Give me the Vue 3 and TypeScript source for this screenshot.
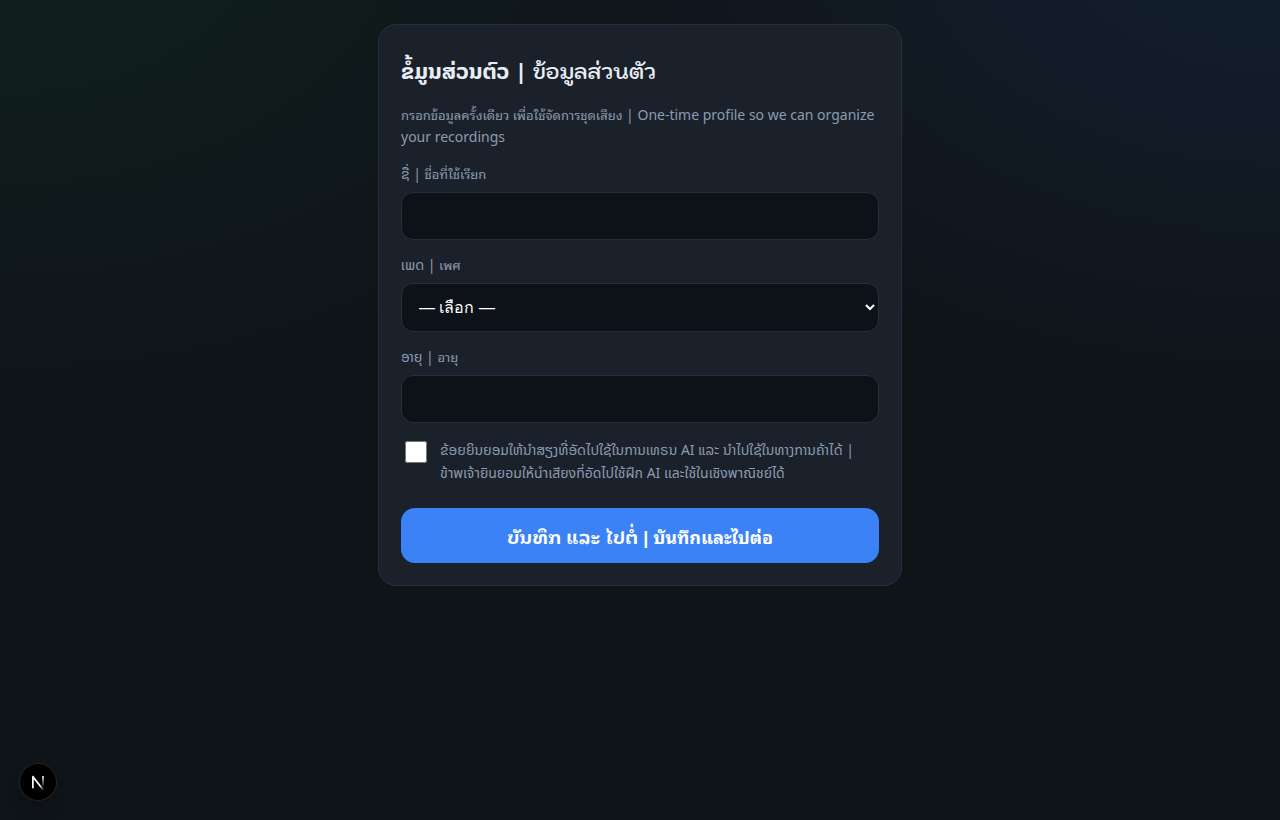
<script setup lang="ts">
import { ref } from 'vue'

const name = ref('')
const gender = ref('')
const age = ref('')
const consent = ref(false)
</script>

<template>
  <main class="page">
    <form class="card" @submit.prevent>
      <h1>ຂໍ້ມູນສ່ວນຕົວ | <span lang="th">ข้อมูลส่วนตัว</span></h1>
      <p class="intro"><span lang="th">กรอกข้อมูลครั้งเดียว เพื่อใช้จัดการชุดเสียง</span> | One-time profile so we can organize your recordings</p>

      <label class="caption" for="name">ຊື່ | <span lang="th">ชื่อที่ใช้เรียก</span></label>
      <input id="name" v-model="name" class="field" type="text" />

      <label class="caption" for="gender">ເພດ | <span lang="th">เพศ</span></label>
      <select id="gender" v-model="gender" class="field">
        <option value="">— เลือก —</option>
        <option value="male">ชาย</option>
        <option value="female">หญิง</option>
      </select>

      <label class="caption" for="age">ອາຍຸ | <span lang="th">อายุ</span></label>
      <input id="age" v-model="age" class="field" type="text" inputmode="numeric" />

      <div class="consent">
        <input id="consent" v-model="consent" type="checkbox" />
        <label for="consent">ຂ້ອຍຍິນຍອມໃຫ້ນຳສຽງທີ່ອັດໄປໃຊ້ໃນການເທຣນ AI ແລະ ນຳໄປໃຊ້ໃນທາງການຄ້າໄດ້ | <span lang="th">ข้าพเจ้ายินยอมให้นำเสียงที่อัดไปใช้ฝึก AI และใช้ในเชิงพาณิชย์ได้</span></label>
      </div>

      <button class="submit" type="submit">ບັນທຶກ ແລະ ໄປຕໍ່ | บันทึกและไปต่อ</button>
    </form>

    <button class="badge" type="button" aria-label="Next.js">
      <svg viewBox="0 0 40 40" width="36" height="36" fill="none" aria-hidden="true">
        <defs>
          <linearGradient id="stem" x1="0" y1="13" x2="0" y2="26" gradientUnits="userSpaceOnUse">
            <stop stop-color="#fff" />
            <stop offset="1" stop-color="#fff" stop-opacity="0" />
          </linearGradient>
          <linearGradient id="slash" x1="20" y1="20" x2="27" y2="29" gradientUnits="userSpaceOnUse">
            <stop stop-color="#fff" />
            <stop offset="0.4" stop-color="#fff" />
            <stop offset="1" stop-color="#fff" stop-opacity="0" />
          </linearGradient>
        </defs>
        <path d="M14.3 27V14.5" stroke="#fff" stroke-width="1.9" />
        <path d="M13.8 13.5L26 28.8" stroke="url(#slash)" stroke-width="1.9" />
        <path d="M24.6 13.2h1.9v12.5h-1.9z" fill="url(#stem)" />
      </svg>
    </button>
  </main>
</template>

<style>
body {
  margin: 0;
  background: #0f1419;
}
</style>

<style scoped>
* {
  box-sizing: border-box;
}

.page {
  min-height: 100vh;
  padding: 24px 18px;
  background:
    radial-gradient(1200px 800px at 0% -10%, rgba(34, 197, 94, 0.08), transparent 60%),
    radial-gradient(1200px 800px at 100% -10%, rgba(59, 130, 246, 0.11), transparent 60%),
    #0f1419;
  color: #e8eef5;
  font-family: "Noto Sans Lao", "Noto Sans", sans-serif;
  font-size: 16px;
  line-height: 24px;
}

.card {
  display: flex;
  flex-direction: column;
  width: 100%;
  max-width: 524px;
  margin: 0 auto;
  padding: 22px;
  border: 1px solid #262e39;
  border-radius: 18px;
  background: #1b212b;
}

span[lang="th"] {
  line-height: 1;
}

h1 {
  margin: 8px 0 16px;
  font-size: 22px;
  font-weight: 700;
  line-height: 33px;
}

h1 span {
  font-family: Kodchasan, "Noto Sans Thai Looped", sans-serif;
  font-size: 21px;
  font-weight: 600;
}

.intro {
  margin: 0 0 15px;
  color: #8b9cb0;
  font-size: 14px;
  line-height: 22px;
}

.intro span,
.caption span {
  font-family: "Noto Sans Thai Looped", sans-serif;
  font-size: 13px;
}

.caption {
  margin-bottom: 7px;
  color: #8b9cb0;
  font-size: 14px;
  line-height: 22px;
}

.consent span {
  font-family: "Noto Sans Thai", sans-serif;
}

.field {
  width: 100%;
  height: 48px;
  margin: 0 0 14px;
  padding: 0 13px;
  border: 1px solid #262e39;
  border-radius: 12px;
  outline: none;
  background: #0d1118;
  color: #fff;
  font-family: "Liberation Sans", sans-serif;
  font-size: 16px;
}

select.field {
  height: 49px;
}

.consent {
  display: flex;
  gap: 12px;
  align-items: flex-start;
  margin-top: 1px;
  color: #8b9cb0;
  font-size: 14px;
  line-height: 23px;
}

.consent input {
  flex: none;
  width: 22px;
  height: 22px;
  margin: 3px 1px 0 4px;
}

.submit {
  height: 55px;
  margin-top: 24px;
  padding: 0 16px;
  border: 0;
  border-radius: 14px;
  background: #3b82f6;
  color: #fff;
  font-family: "Liberation Sans", "Noto Sans Lao Looped", "Noto Sans Thai Looped", sans-serif;
  font-size: 18px;
  font-weight: 700;
}

.badge {
  position: fixed;
  left: 20px;
  bottom: 20px;
  display: grid;
  place-items: center;
  width: 36px;
  height: 36px;
  padding: 0;
  border: 0;
  border-radius: 50%;
  background: #000;
  box-shadow: 0 0 0 1px #242424, 0 12px 20px -6px rgba(0, 0, 0, 0.3);
}
</style>
